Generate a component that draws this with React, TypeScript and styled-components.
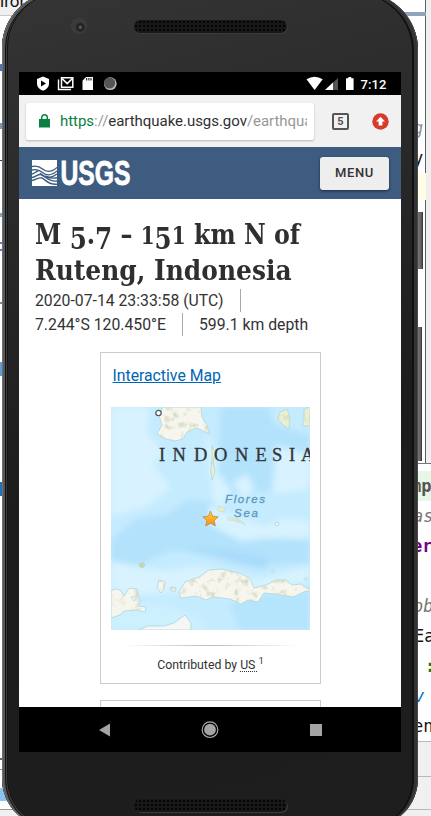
import React from "react";
import styled, { createGlobalStyle } from "styled-components";

const GlobalStyle = createGlobalStyle`
  html, body { margin: 0; padding: 0; background: #fff; }
  * { box-sizing: border-box; }
`;

/* The phone and the windows behind it share one grid cell and stack in source order. */
const Desktop = styled.main`
  display: grid;
  grid-template: 816px / 431px;
  width: 431px;
  height: 816px;
  overflow: hidden;
  background: #fff;
  font-family: Roboto, "Liberation Sans", sans-serif;
  > * { grid-area: 1 / 1; }
`;

const LeftWindow = styled.aside`
  display: flex;
  flex-direction: column;
  width: 40px;
  height: 816px;
`;

const WindowTab = styled.div`
  flex: none;
  height: 16px;
  border-bottom: 1px solid #c9c9c9;
  background: #f0f0f0;
  font-size: 17px;
  line-height: 2px;
  color: #111;
`;

const Strip = styled.i<{ $h: number; $c?: string }>`
  flex: none;
  height: ${(p) => p.$h}px;
  background: ${(p) => p.$c || "transparent"};
`;

const RightWindow = styled.aside`
  display: flex;
  flex-direction: column;
  justify-self: end;
  width: 31px;
  height: 816px;
  font: 17px/30px "DejaVu Sans Mono", monospace;
`;

const EditorTop = styled.div`
  flex: none;
  display: flex;
  flex-direction: column;
  height: 463px;
  border-right: 5px solid #efefef;
  box-shadow: inset -1px 0 0 #606060;
`;

const EditorBottom = styled.div`
  flex: none;
  padding-top: 7px;
  border-top: 1px solid #777;
`;

const CodeLine = styled.div<{ $c?: string; $bg?: string; $bold?: boolean; $italic?: boolean; $indent?: number }>`
  height: 30px;
  padding-left: ${(p) => p.$indent ?? 13}px;
  color: ${(p) => p.$c || "#111"};
  background: ${(p) => p.$bg || "transparent"};
  font-weight: ${(p) => (p.$bold ? 700 : 400)};
  font-style: ${(p) => (p.$italic ? "italic" : "normal")};
  white-space: pre;
  overflow: hidden;
`;

const StatusPanel = styled.div<{ $h: number }>`
  flex: none;
  height: ${(p) => p.$h}px;
  border-top: 1px solid #b8b8b8;
  background: #f0f0f0;
`;

const SideKeys = styled.div`
  display: flex;
  flex-direction: column;
  gap: 58px;
  padding: 212px 0 0 418px;
`;

const SideKey = styled.i<{ $h: number; $w: number }>`
  width: ${(p) => p.$w}px;
  height: ${(p) => p.$h}px;
  background: linear-gradient(90deg, #777, #5b5b5b 70%, #282828);
`;

const Phone = styled.section`
  display: flex;
  flex-direction: column;
  align-items: center;
  width: 416px;
  height: 836px;
  margin: -8px 0 0 2px;
  border-radius: 56px 58px 50px 50px;
  background: linear-gradient(165deg, #353535 0%, #2b2b2b 22%, #1c1c1c 55%, #1e1e1e 100%);
  box-shadow: inset 1px 0 0 #6e7070, inset 3px 1px 0 #55585a, inset 4px 1px 0 #111, inset 5px 0 0 #3c3c3c,
    inset 6px 0 0 #151515, inset -1px 0 0 #484848, inset -4px 1px 0 #343234, inset -6px 1px 0 #101010;
`;

const TopBezel = styled.div`
  flex: none;
  display: grid;
  grid-template-columns: 130px 153px 1fr;
  align-items: center;
  width: 416px;
  height: 80px;
  padding: 0 0 12px 2px;
`;

const BottomBezel = styled.div`
  flex: none;
  display: flex;
  justify-content: center;
  width: 416px;
  padding-top: 47px;
`;

const Speaker = styled.i`
  width: 153px;
  height: 13px;
  border-radius: 7px;
  background-color: #181818;
  background-image: radial-gradient(circle, #050505 0.8px, transparent 1.1px);
  background-size: 4px 4px;
  box-shadow: 1px 1px 0 #3b3b3b;
`;

const Camera = styled.i`
  width: 16px;
  height: 16px;
  margin-left: 67px;
  border-radius: 50%;
  background: radial-gradient(circle at 58% 58%, #73515a 0 1px, #24242d 2px 4px, #3b3b3b 5px);
`;

const Screen = styled.div`
  flex: none;
  display: flex;
  flex-direction: column;
  width: 382px;
  height: 680px;
  background: #fff;
`;

const StatusBar = styled.header`
  flex: none;
  height: 23px;
  background: #000;
`;

const UrlBar = styled.div`
  flex: none;
  display: flex;
  align-items: center;
  height: 52px;
  padding: 0 12px 0 7px;
  background: #f1f1f1;
`;

const UrlField = styled.div`
  display: flex;
  align-items: center;
  width: 288px;
  height: 37px;
  padding: 0 7px 0 13px;
  border-radius: 2px;
  background: #fff;
  box-shadow: 0 1px 2px #b5b5b5;
`;

const UrlText = styled.div`
  width: 247px;
  margin-left: 10px;
  overflow: hidden;
  white-space: nowrap;
  color: #303030;
  font-size: 15px;
  line-height: 22px;
  letter-spacing: -0.04px;
  b { font-weight: 400; color: #0b8043; }
  i { font-style: normal; color: #979797; }
`;

const TabCount = styled.div`
  width: 17px;
  height: 17px;
  margin-left: 18px;
  border: 2px solid #555;
  border-radius: 2px;
  color: #555;
  font-size: 11px;
  font-weight: 700;
  line-height: 13px;
  text-align: center;
`;

const UpdateIcon = styled.svg`
  margin-left: auto;
`;

const SiteHeader = styled.div`
  flex: none;
  display: flex;
  align-items: center;
  justify-content: space-between;
  height: 52px;
  padding: 0 12px 0 13px;
  background: #3d5c80;
`;

const MenuButton = styled.button`
  width: 69px;
  height: 33px;
  padding: 0 0 1px;
  border: 0;
  border-radius: 3px;
  background: #eee;
  box-shadow: 0 1px 3px rgba(0, 0, 0, 0.55);
  color: #333;
  font: 500 13px/32px Roboto, sans-serif;
  letter-spacing: 0.6px;
`;

const Page = styled.article`
  flex: 1;
  min-height: 0;
  overflow: hidden;
  padding: 18px 16px 0;
  color: #333;
`;

const Title = styled.h1`
  margin: 0;
  color: #2f2f2f;
  font: 700 28px/36px "DejaVu Serif", serif;
`;

const TitleLine = styled.span<{ $scale: number }>`
  display: block;
  height: 36px;
  width: max-content;
  white-space: nowrap;
  transform: scaleX(${(p) => p.$scale});
  transform-origin: 0 0;
`;

const Digit = styled.span<{ $low?: boolean }>`
  font-size: ${(p) => (p.$low ? 29 : 23.5)}px;
  line-height: 0;
  vertical-align: ${(p) => (p.$low ? -5 : 0)}px;
`;

const Facts = styled.div`
  display: flex;
  align-items: center;
  height: 23.5px;
  font-size: 15.78px;
  line-height: 23px;
  white-space: nowrap;
`;

const Divider = styled.i`
  width: 1px;
  height: 23px;
  margin: 0 16px;
  background: #aaa;
`;

const Card = styled.div`
  display: flex;
  flex-direction: column;
  width: 221px;
  height: 332px;
  margin: 16px 0 0 65px;
  padding: 0 10px;
  border: 1px solid #ccc;
`;

const NextCard = styled(Card)`
  height: 80px;
`;

const MapLink = styled.a`
  margin: 12px 0 20px 1.5px;
  color: #0066b3;
  font-size: 15.78px;
  line-height: 22px;
  text-decoration: underline;
`;

const Rule = styled.i`
  flex: none;
  height: 1px;
  margin: 15px 12px 0;
  background: linear-gradient(90deg, #fff, #bbb 50%, #fff);
`;

const Credit = styled.p`
  margin: 9px 0 0;
  font-size: 12.3px;
  line-height: 20px;
  text-align: center;
  white-space: nowrap;
  abbr { text-decoration: underline dotted #333 1px; text-underline-offset: 2px; }
  sup { font-size: 9.5px; line-height: 0; vertical-align: 5px; }
`;

const NavBar = styled.nav`
  flex: none;
  height: 45px;
  background: #000;
`;

const leftStrips: Array<[number, string?]> = [
  [48], [7, "#4878ae"], [52], [6, "#8096ad"], [31], [1, "#1d3f78"], [52], [4, "#8b9fb7"], [25], [2, "#9067c6"],
  [5], [2, "#9067c6"], [51], [2, "#888"], [58], [14, "#609bd1"], [106], [14, "#2670ba"], [262], [2, "#666"],
  [9], [1, "#888"], [18], [13, "#8dc4ed"], [8], [1, "#999"], [6, "#f0f0f0"],
];

const StatusIcons = () => (
  <svg width="382" height="23" viewBox="19 72 382 23">
    <path d="M43 76.500 49 79v4.500q0 5-6 7.200-6-2.200-6-7.200V79z" fill="#fff" />
    <path d="m41 80.500 5 3-5 3z" fill="#000" />
    <path d="M58.500 79.500v10H71" fill="none" stroke="#fff" strokeWidth="1.400" />
    <path d="M61.500 87.300v-9.600h11.300v9.600z" fill="none" stroke="#fff" strokeWidth="1.500" />
    <path d="m62 78.500 5.200 5 5.200-5" fill="none" stroke="#fff" strokeWidth="1.700" />
    <path d="M86 77h7v13H82.500v-9.300z" fill="#fff" />
    <path d="M86.700 78v2.500M88.900 78v2.500M91 78v2.500" stroke="#000" />
    <circle cx="110.300" cy="83.700" r="6.400" fill="#bbb" />
    <circle cx="109.600" cy="83" r="5.600" fill="#555" />
    <path d="M306.500 79.300q8-5 16.200 0L314.600 90z" fill="#fff" />
    <path d="M325 90 338 78v12z" fill="#555" />
    <path d="M325 90 333 82.500V90z" fill="#fff" />
    <path d="M346 78.300h2.300V77h3v1.300h2.300V90H346z" fill="#fff" />
    <text x="360.500" y="88.800" fill="#fff" fontFamily="Roboto, sans-serif" fontWeight="500" fontSize="13" textLength="26">7:12</text>
  </svg>
);

const UsgsLogo = () => (
  <svg width="100" height="28" viewBox="0 0 100 28">
    <path fill="#fff" d="M0 1h25v26H0z" />
    <g fill="none" stroke="#3d5c80" strokeWidth="1.400">
      <path d="M0 7.500c4.500-1 7-.500 10.500 2.500s9 3.500 14.500-1.500M0 11c4.500-1 7-.500 10.500 2.500s9 3.500 14.500-1.500M8 14.200c5 5 11 5.500 17 .800" />
      <path d="M0 15c3-.500 4-2.700 6.500-3.200M0 18.500c4-1 6-3.600 9-3 4 .800 7 7.500 16 6.500M0 21.500c4-1 7-3.500 10-2.500 3 1.200 6 7 15 6.200M13 17c3 1.500 6 3 12 1.800" />
    </g>
    <text x="28.500" y="26.200" fill="#fff" stroke="#fff" strokeWidth="0.900" fontFamily="Liberation Sans, sans-serif" fontWeight="700" fontSize="35" textLength="70" lengthAdjust="spacingAndGlyphs">USGS</text>
  </svg>
);

const countryLetters: Array<[string, number]> = [
  ["I", 48], ["N", 61.5], ["D", 83], ["O", 103], ["N", 124], ["E", 144.5], ["S", 161], ["I", 178], ["A", 190],
];

const MapDrawing = () => (
  <svg width="199" height="223" viewBox="0 0 199 223">
    <defs>
      <filter id="soft" x="-20%" y="-20%" width="140%" height="140%"><feGaussianBlur stdDeviation="3" /></filter>
      <filter id="relief" x="0" y="0" width="100%" height="100%">
        <feTurbulence type="fractalNoise" baseFrequency="0.13" numOctaves="3" seed="6" />
        <feColorMatrix values="0 0 0 0 .66  0 0 0 0 .69  0 0 0 0 .52  3.4 0 0 0 -1.75" />
        <feComposite in2="SourceGraphic" operator="in" result="n" />
        <feMerge><feMergeNode in="SourceGraphic" /><feMergeNode in="n" /></feMerge>
      </filter>
      <linearGradient id="gold" x1="0" y1="0" x2="0" y2="1"><stop stopColor="#ffcf43" /><stop offset="1" stopColor="#ff8c12" /></linearGradient>
    </defs>
    <path fill="#c5ebff" d="M0 0h199v223H0z" />
    <g filter="url(#soft)">
      <path fill="#b3e2fc" d="M110 0h48l5 18 36 10v52l-48 5-29 2-17-20 3-30zM0 133l25-21 31-5 22-14 25 2 12 26 40 8 44 1v26l-40 2-50-17-50 3-38 18-21-7z" />
      <path fill="#a9dcfa" d="M69 143q35-5 57 2l32 4-3 14q-35-7-59-15z" />
      <path fill="#d8f3ff" d="M0 0h39l-3 26 18 21-13 9 18 24-22 19-37 10zM93 28l15 18-2 18 15 20-16 21-6-37zM165 38l34 10v34l-38 5zM122 75l14-8 8 14-12 11zM97 98l27 13 32 8 18-8 25 3v18l-38-1-31 3-31-16zM0 154l52 10 35-5 33 6 28 7 51-13v16l-54 8-14 8-62-6-69 5z" />
      <path fill="#b5e4fd" d="M118 197l29-9 52-4v39h-69z" />
      <path fill="#cdf0ff" d="M0 193l52 5 26 8 21 17H0z" />
    </g>
    <g filter="url(#relief)" stroke="#a9d8dc" strokeWidth=".8" fill="#f6f5ee">
      <path d="M52 0 48 9l3 9-5 9 9 5 9 2 8-2 4-7 10-4 13 6-3-9-5-8-1-10z" />
      <path fill="#eaf0cf" d="m169 5 7-3 3 8-1 12-6-4-5-6zM193 3l6-4v20h-8l2-7z" />
      <path fill="#f2efcf" d="m101 38 3 8-2 9 2 10-3 8-1-10 1-11z" />
      <path d="M0 184q6-4 10 0l3 5 5-8 8 1 3 12-2 5 8 1-1 5-9-2-12 1-4 4-9 3z" />
      <path d="m48 173 6 2-1 7-3 4-4-5zM60 180l5 1-1 4-5-2zM68 185l6-10 14-5 10-7 13-1 17 4 11 5 4 10 12-3 10-5 10 0 6 5 9-1 7 5 13-1v3l-10 1-5-1-13 6-17-3-12-1-6 9-10-2-7 4-11-5-17-2-7 3-10-4-15 2z" />
      <path d="M20 190l7 0-4 4z" />
      <path fill="#e9eac8" d="m107 99 7 2-1 4-6-1zM117 110l12 3 6 5-10-4-8-1z" strokeWidth=".4" />
      <circle cx="31" cy="158" r="2.600" fill="#cad7a8" />
      <circle cx="166" cy="117" r="1.800" />
      <circle cx="162" cy="164" r="1.300" />
      <circle cx="195" cy="172" r="1.400" />
    </g>
    <path fill="#f6f6f4" stroke="#a9d8dc" strokeWidth=".8" d="m27 223 10-4 16 0 10-3 11-8 6 8v7z" />
    <circle cx="47.500" cy="6" r="2.700" fill="#fff" stroke="#555" strokeWidth="1.200" />
    <g fill="#303538" stroke="#303538" strokeWidth=".3" fontFamily="Liberation Serif, serif" fontSize="18.500">
      {countryLetters.map(([letter, x]) => (
        <text key={x} x={x} y="53.500">{letter}</text>
      ))}
    </g>
    <g fill="#5b98b9" fontFamily="Liberation Sans, sans-serif" fontStyle="italic" fontSize="11.500" stroke="#5b98b9" strokeWidth=".3">
      <text x="114" y="95.500" textLength="40">Flores</text>
      <text x="123" y="110" textLength="24">Sea</text>
    </g>
    <path d="m99.500 104.200 2.200 5 5.500.600-4 3.800 1.100 5.300-4.800-2.700-4.800 2.700 1.100-5.300-4-3.800 5.500-.600z" fill="url(#gold)" stroke="#b9803a" strokeWidth=".7" />
  </svg>
);

const NavIcons = () => (
  <svg width="382" height="45" viewBox="19 707 382 45">
    <path d="M99 730 110 723.500v13z" fill="#a4a4a4" />
    <circle cx="210" cy="729.700" r="7.800" fill="none" stroke="#aaa" strokeWidth="1.200" />
    <circle cx="210" cy="729.700" r="5.900" fill="#a4a4a4" />
    <path d="M310 724h12v12h-12z" fill="#a4a4a4" />
  </svg>
);

export default function App() {
  return (
    <>
      <GlobalStyle />
      <Desktop>
        <LeftWindow>
          <WindowTab>iror</WindowTab>
          {leftStrips.map(([height, color], i) => <Strip key={i} $h={height} $c={color} />)}
        </LeftWindow>

        <RightWindow>
          <EditorTop>
            <Strip $h={12} />
            <Strip $h={4} $c="#93a3bb" />
            <Strip $h={97} />
            <CodeLine $c="#8894a5" $italic>g</CodeLine>
            <CodeLine>y;</CodeLine>
            <Strip $h={27} $c="#fffde5" />
          </EditorTop>
          <EditorBottom>
            <CodeLine $bg="#e6f7e6" $c="#555" $bold $indent={11}>mp</CodeLine>
            <CodeLine $c="#777" $italic>as</CodeLine>
            <CodeLine $c="#770088" $bold $indent={12}>er</CodeLine>
            <CodeLine />
            <CodeLine $c="#777" $italic>ob</CodeLine>
            <CodeLine $indent={14}>Ea</CodeLine>
            <CodeLine $c="#168000" $bold $indent={25}>:</CodeLine>
            <CodeLine $c="#006fc9" $italic $indent={14}>v</CodeLine>
            <CodeLine>en</CodeLine>
          </EditorBottom>
          <StatusPanel $h={35} />
          <StatusPanel $h={33} />
          <StatusPanel $h={7} />
        </RightWindow>

        <SideKeys>
          <SideKey $h={57} $w={5} />
          <SideKey $h={134} $w={4} />
        </SideKeys>

        <Phone>
          <TopBezel>
            <Camera />
            <Speaker />
          </TopBezel>
          <Screen>
            <StatusBar><StatusIcons /></StatusBar>
            <UrlBar>
              <UrlField>
                <svg width="11" height="14" viewBox="0 0 11 14">
                  <path d="M0 5h11v8.500H0z" fill="#0b8043" />
                  <path d="M2.700 5.500V3.600a2.800 2.800 0 0 1 5.600 0v1.900" fill="none" stroke="#0b8043" strokeWidth="1.500" />
                </svg>
                <UrlText><b>https</b><i>://</i>earthquake.usgs.gov<i>/earthqua</i></UrlText>
              </UrlField>
              <TabCount>5</TabCount>
              <UpdateIcon width="17" height="17" viewBox="0 0 17 17">
                <circle cx="8.500" cy="8.500" r="8.200" fill="#d63b2c" />
                <path d="m8.500 3.700 4.500 4.700h-2.600v4H6.600v-4H4z" fill="#fff" />
              </UpdateIcon>
            </UrlBar>
            <SiteHeader>
              <UsgsLogo />
              <MenuButton>MENU</MenuButton>
            </SiteHeader>
            <Page>
              <Title>
                <TitleLine $scale={0.85}>M <Digit $low>5</Digit>.<Digit $low>7</Digit> – <Digit>1</Digit><Digit $low>5</Digit><Digit>1</Digit> km N of</TitleLine>
                <TitleLine $scale={0.89}>Ruteng, Indonesia</TitleLine>
              </Title>
              <Facts>2020-07-14 23:33:58 (UTC)<Divider /></Facts>
              <Facts>7.244°S 120.450°E<Divider />599.1 km depth</Facts>
              <Card>
                <MapLink>Interactive Map</MapLink>
                <MapDrawing />
                <Rule />
                <Credit>Contributed by <abbr>US </abbr><sup>1</sup></Credit>
              </Card>
              <NextCard />
            </Page>
            <NavBar><NavIcons /></NavBar>
          </Screen>
          <BottomBezel><Speaker /></BottomBezel>
        </Phone>
      </Desktop>
    </>
  );
}
